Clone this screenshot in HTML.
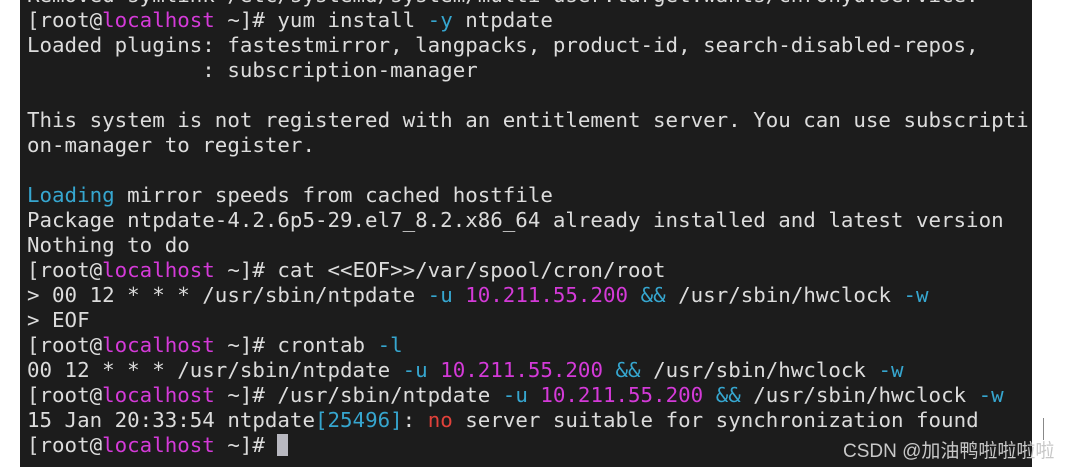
<!DOCTYPE html>
<html><head><meta charset="utf-8"><style>
body{margin:0;width:1072px;height:469px;background:#fff;position:relative;overflow:hidden}
.t{position:absolute;left:20px;top:0;width:1012px;height:467px;background:#1c1c1c}
pre{margin:0;position:absolute;left:27px;top:-17px;font-family:"DejaVu Sans Mono","Liberation Mono",monospace;font-size:20.8px;line-height:25px;color:#dcdcdc;white-space:pre}
.m{color:#d43ad8}.c{color:#36a6cf}.r{color:#e0413a}
.cur{display:inline-block;width:11px;height:22px;background:#b8b8c0;vertical-align:-4px}
.wm{position:absolute;left:843px;top:436px;font-family:"Liberation Sans","Noto Sans CJK SC",sans-serif;font-size:19px;color:#c8c8c8;white-space:nowrap}
.ln{position:absolute;left:1043px;top:418px;width:1px;height:22px;background:#888}
</style></head><body>
<div class="t"></div>
<pre>Removed symlink /etc/systemd/system/multi-user.target.wants/chronyd.service.
[root@<span class="m">localhost</span> ~]# yum install <span class="c">-y</span> ntpdate
Loaded plugins: fastestmirror, langpacks, product-id, search-disabled-repos,
              : subscription-manager

This system is not registered with an entitlement server. You can use subscripti
on-manager to register.

<span class="c">Loading</span> mirror speeds from cached hostfile
Package ntpdate-4.2.6p5-29.el7_8.2.x86_64 already installed and latest version
Nothing to do
[root@<span class="m">localhost</span> ~]# cat &lt;&lt;EOF&gt;&gt;/var/spool/cron/root
&gt; 00 12 * * * /usr/sbin/ntpdate <span class="c">-u</span> <span class="m">10.211.55.200</span> <span class="c">&amp;&amp;</span> /usr/sbin/hwclock <span class="c">-w</span>
&gt; EOF
[root@<span class="m">localhost</span> ~]# crontab <span class="c">-l</span>
00 12 * * * /usr/sbin/ntpdate <span class="c">-u</span> <span class="m">10.211.55.200</span> <span class="c">&amp;&amp;</span> /usr/sbin/hwclock <span class="c">-w</span>
[root@<span class="m">localhost</span> ~]# /usr/sbin/ntpdate <span class="c">-u</span> <span class="m">10.211.55.200</span> <span class="c">&amp;&amp;</span> /usr/sbin/hwclock <span class="c">-w</span>
15 Jan 20:33:54 ntpdate<span class="c">[25496]</span>: <span class="r">no</span> server suitable for synchronization found
[root@<span class="m">localhost</span> ~]# <span class="cur"></span></pre>
<div class="ln"></div>
<div class="wm">CSDN @加油鸭啦啦啦啦</div>
</body></html>
